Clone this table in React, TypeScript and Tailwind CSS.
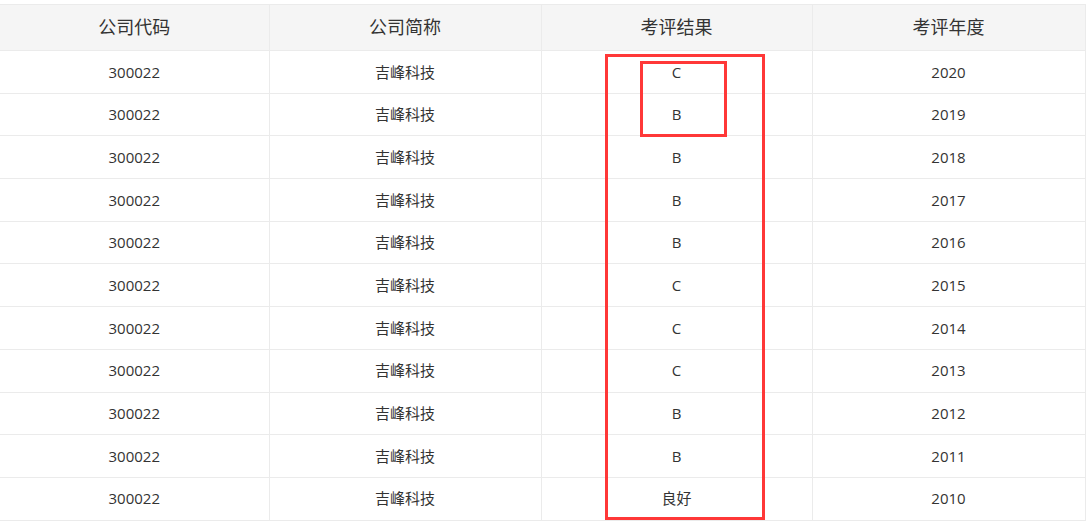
const rows = [
  ["300022", "吉峰科技", "C", "2020"],
  ["300022", "吉峰科技", "B", "2019"],
  ["300022", "吉峰科技", "B", "2018"],
  ["300022", "吉峰科技", "B", "2017"],
  ["300022", "吉峰科技", "B", "2016"],
  ["300022", "吉峰科技", "C", "2015"],
  ["300022", "吉峰科技", "C", "2014"],
  ["300022", "吉峰科技", "C", "2013"],
  ["300022", "吉峰科技", "B", "2012"],
  ["300022", "吉峰科技", "B", "2011"],
  ["300022", "吉峰科技", "良好", "2010"],
];

const headers = ["公司代码", "公司简称", "考评结果", "考评年度"];

export default function App() {
  return (
    <div
      className="relative w-[1087px] h-[524px] bg-white text-[#333] overflow-hidden"
      style={{ fontFamily: '"Open Sans", "Noto Sans CJK SC", sans-serif' }}
    >
      <div className="pt-[4px]">
        <table className="w-[1085px] border-collapse table-fixed">
          <colgroup>
            <col className="w-[269px]" />
            <col className="w-[272px]" />
            <col className="w-[271px]" />
            <col className="w-[273px]" />
          </colgroup>
          <thead>
            <tr className="h-[46px] bg-[#f5f5f5]">
              {headers.map((h, j) => (
                <th
                  key={h}
                  className={`border border-[#ebebeb] text-[18px] font-normal text-center p-0 ${j === 0 ? "border-l-0" : ""}`}
                >
                  {h}
                </th>
              ))}
            </tr>
          </thead>
          <tbody>
            {rows.map((r, i) => (
              <tr key={i} className="h-[42.7px]">
                {r.map((c, j) => (
                  <td
                    key={j}
                    className={`border border-[#ebebeb] text-[15px] text-center p-0 ${j === 0 ? "border-l-0" : ""}`}
                  >
                    {c}
                  </td>
                ))}
              </tr>
            ))}
          </tbody>
        </table>
      </div>

      {/* annotations */}
      <div className="absolute left-[605px] top-[54px] w-[160px] h-[466px] border-[3px] border-[#ff3838]" />
      <div className="absolute left-[640px] top-[61px] w-[87px] h-[76px] border-[3px] border-[#ff3838]" />
    </div>
  );
}
